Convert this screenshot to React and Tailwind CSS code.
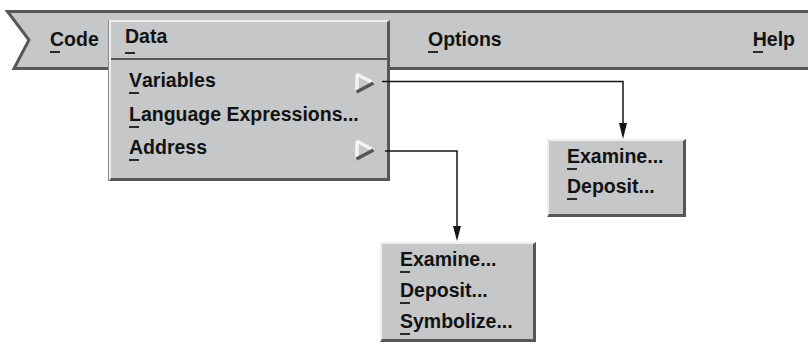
import React from 'react';

const font = "font-['Liberation_Sans',Arial,Helvetica,sans-serif] font-bold text-[19.5px] text-[#121212]";

// first letter with the short mnemonic dash under it
function U({ c, top = 'top-[23px]' }) {
  return (
    <span className="relative">
      {c}
      <span className={`absolute left-0 ${top} h-[2px] w-[10px] bg-[#2a2a2a]`} />
    </span>
  );
}

function Label({ text, top }) {
  return (
    <span>
      <U c={text[0]} top={top} />
      {text.slice(1)}
    </span>
  );
}

function Cascade() {
  return (
    <svg width="20" height="22" viewBox="0 0 20 22" className="mt-[7.5px] shrink-0">
      <path d="M2 2.5 V19.5" stroke="#f4f4f4" strokeWidth="3.5" />
      <path d="M1.5 2 L18.5 11" stroke="#f4f4f4" strokeWidth="3.5" />
      <path d="M1.5 20 L18.5 11" stroke="#565656" strokeWidth="3.5" />
    </svg>
  );
}

function Submenu({ items, className }) {
  return (
    <div
      className={`absolute bg-[#c6c7c9] border-l-2 border-t-2 border-r-[3px] border-b-[3px] border-l-[#eeeeee] border-t-[#eeeeee] border-r-[#575757] border-b-[#575757] pl-[18px] ${className}`}
    >
      {items.map((t) => (
        <div key={t}>
          <Label text={t} />
        </div>
      ))}
    </div>
  );
}

export default function App() {
  return (
    <div className={`relative w-[808px] h-[345px] bg-white overflow-hidden ${font}`}>
      {/* menu bar */}
      <div className="pt-[10px] flex">
        <svg width="40" height="60" viewBox="0 0 40 60" className="shrink-0 block">
          <polygon points="41,1.5 7.5,1.5 29,30 14,58.5 41,58.5" fill="#c6c7c9" />
          <polyline points="41,1.5 7.5,1.5 29,30 14,58.5 41,58.5" fill="none" stroke="#575757" strokeWidth="3" strokeLinejoin="miter" />
        </svg>
        <div className="flex-1 h-[60px] bg-[#c6c7c9] border-y-[3px] border-[#575757] flex items-start pt-[16px] leading-[20px] pl-[10px] pr-[13px]">
          <span className="w-[378px]">
            <Label text="Code" />
          </span>
          <Label text="Options" />
          <span className="ml-auto">
            <Label text="Help" />
          </span>
        </div>
      </div>

      {/* Data pulldown */}
      <div className="absolute left-[109px] top-[20px] w-[281px] h-[161px] bg-[#c6c7c9] border-l-2 border-t-2 border-r-[3px] border-b-[3px] border-l-[#eeeeee] border-t-[#eeeeee] border-r-[#575757] border-b-[#575757] shadow-[-1px_0_0_#8a8a8a]">
        <div className="h-[38px] pt-[4px] pl-[14px] leading-[20px] border-b-2 border-[#575757]">
          <Label text="Data" top="top-[27px]" />
        </div>
        <div className="pt-[4px] pl-[18px] pr-[12px] leading-[33.5px]">
          <div className="flex justify-between items-start">
            <Label text="Variables" />
            <Cascade />
          </div>
          <div className="flex">
            <Label text="Language Expressions..." />
          </div>
          <div className="flex justify-between items-start">
            <Label text="Address" />
            <Cascade />
          </div>
        </div>
      </div>

      <Submenu
        items={['Examine...', 'Deposit...']}
        className="left-[547px] top-[139px] w-[139px] h-[78px] leading-[30px]"
      />
      <Submenu
        items={['Examine...', 'Deposit...', 'Symbolize...']}
        className="left-[380px] top-[242px] w-[156px] h-[100px] leading-[31px]"
      />

      {/* connectors */}
      <svg className="absolute left-0 top-0 pointer-events-none" width="808" height="345" viewBox="0 0 808 345">
        <path d="M382 81.5 H623 V126" fill="none" stroke="#151515" strokeWidth="1.5" />
        <polygon points="619,123 627,123 623,139" fill="#151515" />
        <path d="M385 151 H457 V228" fill="none" stroke="#151515" strokeWidth="1.5" />
        <polygon points="453,226 461,226 457,241" fill="#151515" />
      </svg>
    </div>
  );
}
